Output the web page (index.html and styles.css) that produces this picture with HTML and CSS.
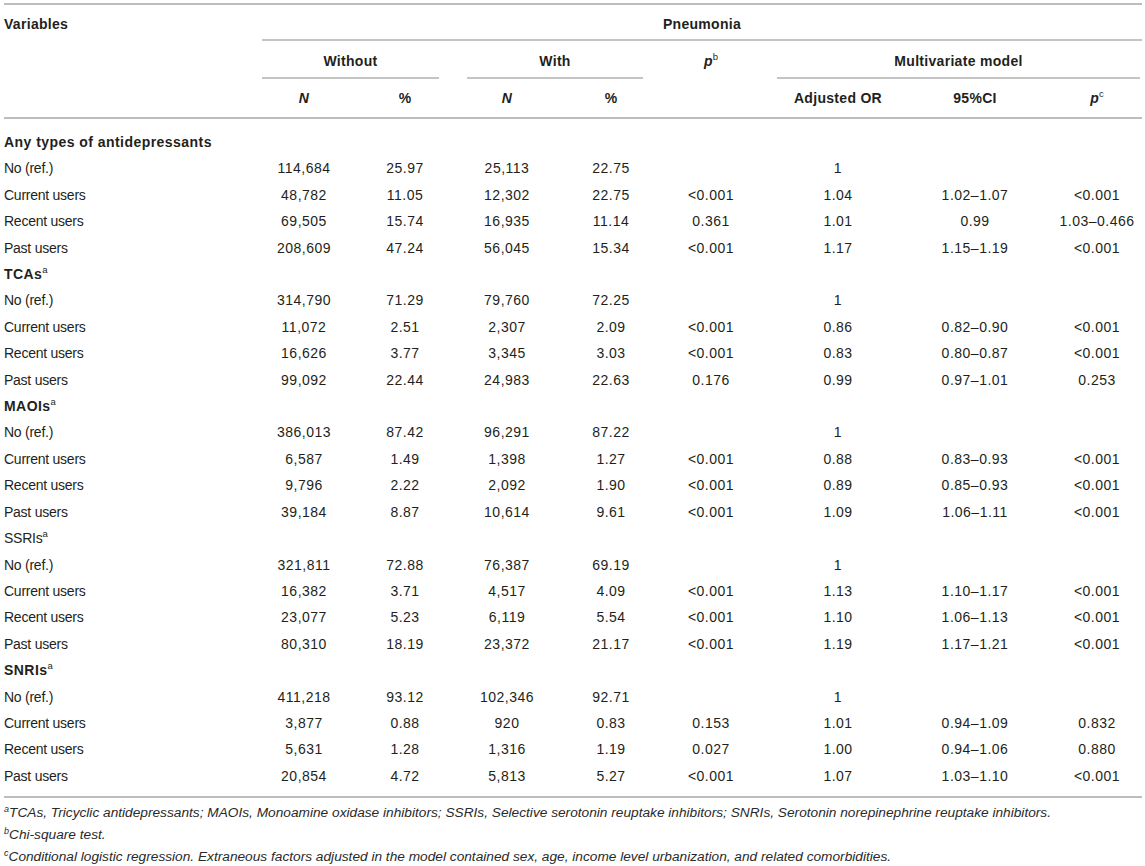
FILE: index.html
```html
<!DOCTYPE html>
<html lang="en">
<head>
<meta charset="utf-8">
<title>Antidepressants and pneumonia</title>
<link rel="stylesheet" href="styles.css">
</head>
<body>
<div class="page">
<table class="tbl">
  <colgroup>
    <col class="w1"><col class="w2"><col class="w3"><col class="w4"><col class="w5"><col class="w6"><col class="w7"><col class="w8"><col class="w9">
  </colgroup>
  <thead>
    <tr class="h1">
      <th class="left"><div class="hd">Variables</div></th>
      <th colspan="8"><div class="hd line">Pneumonia</div></th>
    </tr>
    <tr class="h2">
      <th><div class="hd"></div></th>
      <th colspan="2"><div class="hd line without">Without</div></th>
      <th colspan="2"><div class="hd line with">With</div></th>
      <th><div class="hd"><i>p</i><sup>b</sup></div></th>
      <th colspan="3"><div class="hd line multi">Multivariate model</div></th>
    </tr>
    <tr class="h3 cells">
      <th></th>
      <th><i>N</i></th>
      <th>%</th>
      <th><i>N</i></th>
      <th>%</th>
      <th></th>
      <th>Adjusted OR</th>
      <th>95%CI</th>
      <th><i>p</i><sup>c</sup></th>
    </tr>
  </thead>
  <tbody>
    <tr class="group first"><td colspan="9" class="bold">Any types of antidepressants</td></tr>
    <tr class="cells"><td>No (ref.)</td><td>114,684</td><td>25.97</td><td>25,113</td><td>22.75</td><td></td><td>1</td><td></td><td></td></tr>
    <tr class="cells"><td>Current users</td><td>48,782</td><td>11.05</td><td>12,302</td><td>22.75</td><td>&lt;0.001</td><td>1.04</td><td>1.02–1.07</td><td>&lt;0.001</td></tr>
    <tr class="cells"><td>Recent users</td><td>69,505</td><td>15.74</td><td>16,935</td><td>11.14</td><td>0.361</td><td>1.01</td><td>0.99</td><td>1.03–0.466</td></tr>
    <tr class="cells"><td>Past users</td><td>208,609</td><td>47.24</td><td>56,045</td><td>15.34</td><td>&lt;0.001</td><td>1.17</td><td>1.15–1.19</td><td>&lt;0.001</td></tr>

    <tr class="group"><td colspan="9" class="bold">TCAs<sup>a</sup></td></tr>
    <tr class="cells"><td>No (ref.)</td><td>314,790</td><td>71.29</td><td>79,760</td><td>72.25</td><td></td><td>1</td><td></td><td></td></tr>
    <tr class="cells"><td>Current users</td><td>11,072</td><td>2.51</td><td>2,307</td><td>2.09</td><td>&lt;0.001</td><td>0.86</td><td>0.82–0.90</td><td>&lt;0.001</td></tr>
    <tr class="cells"><td>Recent users</td><td>16,626</td><td>3.77</td><td>3,345</td><td>3.03</td><td>&lt;0.001</td><td>0.83</td><td>0.80–0.87</td><td>&lt;0.001</td></tr>
    <tr class="cells"><td>Past users</td><td>99,092</td><td>22.44</td><td>24,983</td><td>22.63</td><td>0.176</td><td>0.99</td><td>0.97–1.01</td><td>0.253</td></tr>

    <tr class="group"><td colspan="9" class="bold">MAOIs<sup>a</sup></td></tr>
    <tr class="cells"><td>No (ref.)</td><td>386,013</td><td>87.42</td><td>96,291</td><td>87.22</td><td></td><td>1</td><td></td><td></td></tr>
    <tr class="cells"><td>Current users</td><td>6,587</td><td>1.49</td><td>1,398</td><td>1.27</td><td>&lt;0.001</td><td>0.88</td><td>0.83–0.93</td><td>&lt;0.001</td></tr>
    <tr class="cells"><td>Recent users</td><td>9,796</td><td>2.22</td><td>2,092</td><td>1.90</td><td>&lt;0.001</td><td>0.89</td><td>0.85–0.93</td><td>&lt;0.001</td></tr>
    <tr class="cells"><td>Past users</td><td>39,184</td><td>8.87</td><td>10,614</td><td>9.61</td><td>&lt;0.001</td><td>1.09</td><td>1.06–1.11</td><td>&lt;0.001</td></tr>

    <tr class="group"><td colspan="9">SSRIs<sup>a</sup></td></tr>
    <tr class="cells"><td>No (ref.)</td><td>321,811</td><td>72.88</td><td>76,387</td><td>69.19</td><td></td><td>1</td><td></td><td></td></tr>
    <tr class="cells"><td>Current users</td><td>16,382</td><td>3.71</td><td>4,517</td><td>4.09</td><td>&lt;0.001</td><td>1.13</td><td>1.10–1.17</td><td>&lt;0.001</td></tr>
    <tr class="cells"><td>Recent users</td><td>23,077</td><td>5.23</td><td>6,119</td><td>5.54</td><td>&lt;0.001</td><td>1.10</td><td>1.06–1.13</td><td>&lt;0.001</td></tr>
    <tr class="cells"><td>Past users</td><td>80,310</td><td>18.19</td><td>23,372</td><td>21.17</td><td>&lt;0.001</td><td>1.19</td><td>1.17–1.21</td><td>&lt;0.001</td></tr>

    <tr class="group"><td colspan="9" class="bold">SNRIs<sup>a</sup></td></tr>
    <tr class="cells"><td>No (ref.)</td><td>411,218</td><td>93.12</td><td>102,346</td><td>92.71</td><td></td><td>1</td><td></td><td></td></tr>
    <tr class="cells"><td>Current users</td><td>3,877</td><td>0.88</td><td>920</td><td>0.83</td><td>0.153</td><td>1.01</td><td>0.94–1.09</td><td>0.832</td></tr>
    <tr class="cells"><td>Recent users</td><td>5,631</td><td>1.28</td><td>1,316</td><td>1.19</td><td>0.027</td><td>1.00</td><td>0.94–1.06</td><td>0.880</td></tr>
    <tr class="cells last"><td>Past users</td><td>20,854</td><td>4.72</td><td>5,813</td><td>5.27</td><td>&lt;0.001</td><td>1.07</td><td>1.03–1.10</td><td>&lt;0.001</td></tr>
  </tbody>
</table>
<div class="notes">
  <p><sup>a</sup>TCAs, Tricyclic antidepressants; MAOIs, Monoamine oxidase inhibitors; SSRIs, Selective serotonin reuptake inhibitors; SNRIs, Serotonin norepinephrine reuptake inhibitors.</p>
  <p><sup>b</sup>Chi-square test.</p>
  <p><sup>c</sup>Conditional logistic regression. Extraneous factors adjusted in the model contained sex, age, income level urbanization, and related comorbidities.</p>
</div>
</div>
</body>
</html>
```

FILE: styles.css
```css
html, body {
  margin: 0;
  padding: 0;
  background: #ffffff;
}

.page {
  padding: 3px 3px 0 4px;
  font-family: "Liberation Sans", Arial, sans-serif;
  font-size: 14px;
  color: #231f20;
}

.tbl {
  width: 1138px;
  border-collapse: collapse;
  table-layout: fixed;
}

.w1 { width: 258px; }
.w2 { width: 84px; }
.w3 { width: 118px; }
.w4 { width: 86px; }
.w5 { width: 122px; }
.w6 { width: 78px; }
.w7 { width: 170px; }
.w8 { width: 120px; }
.w9 { width: 102px; }

.tbl th,
.tbl td {
  padding: 0;
  font-weight: normal;
  text-align: center;
  vertical-align: top;
}

.tbl thead {
  border-top: 2px solid #bdbdbd;
  border-bottom: 2px solid #bdbdbd;
}

.tbl thead th {
  font-weight: bold;
  letter-spacing: 0.3px;
  line-height: 18px;
}

.tbl th.left {
  text-align: left;
}

.hd {
  padding: 10px 0 6px;
  line-height: 18px;
  min-height: 18px;
  border-bottom: 2px solid transparent;
}

.h2 .hd {
  padding-top: 11px;
  padding-bottom: 7px;
}

.hd.line {
  border-bottom-color: #c4c4c4;
}

.hd.without { margin-right: 25px; }
.hd.with { margin-left: 3px; margin-right: 29px; }
.hd.multi { margin-left: 27px; margin-right: 2px; }

.h3 th {
  padding-top: 10px;
  padding-bottom: 10px;
}

.tbl sup {
  font-size: 9.5px;
  line-height: 0;
  vertical-align: 6px;
  font-weight: normal;
  letter-spacing: 0;
}

.tbl tbody {
  border-bottom: 2px solid #bdbdbd;
}

.tbl tbody td {
  line-height: 26.4px;
  height: 26.4px;
}

.tbl tbody td:first-child,
.tbl thead .h3 th:first-child {
  text-align: left;
}

.tbl tbody .cells td {
  letter-spacing: 0.5px;
}

.tbl tbody .cells td:first-child,
.group td {
  letter-spacing: -0.25px;
}

.cells > :nth-child(7) { padding-left: 6px; }
.cells > :nth-child(8) { padding-right: 10px; }
.cells > :nth-child(9) { padding-left: 12px; }

.group td.bold {
  font-weight: bold;
  letter-spacing: 0.45px;
}

.group.first td {
  padding-top: 10px;
}

.cells.last td {
  padding-bottom: 7px;
}

.notes {
  margin-top: 4px;
  font-style: italic;
  font-size: 13.7px;
  color: #2a2a2a;
}

.notes p {
  margin: 0;
  line-height: 22px;
}

.notes sup {
  font-size: 9px;
  line-height: 0;
  vertical-align: 5px;
}
```
